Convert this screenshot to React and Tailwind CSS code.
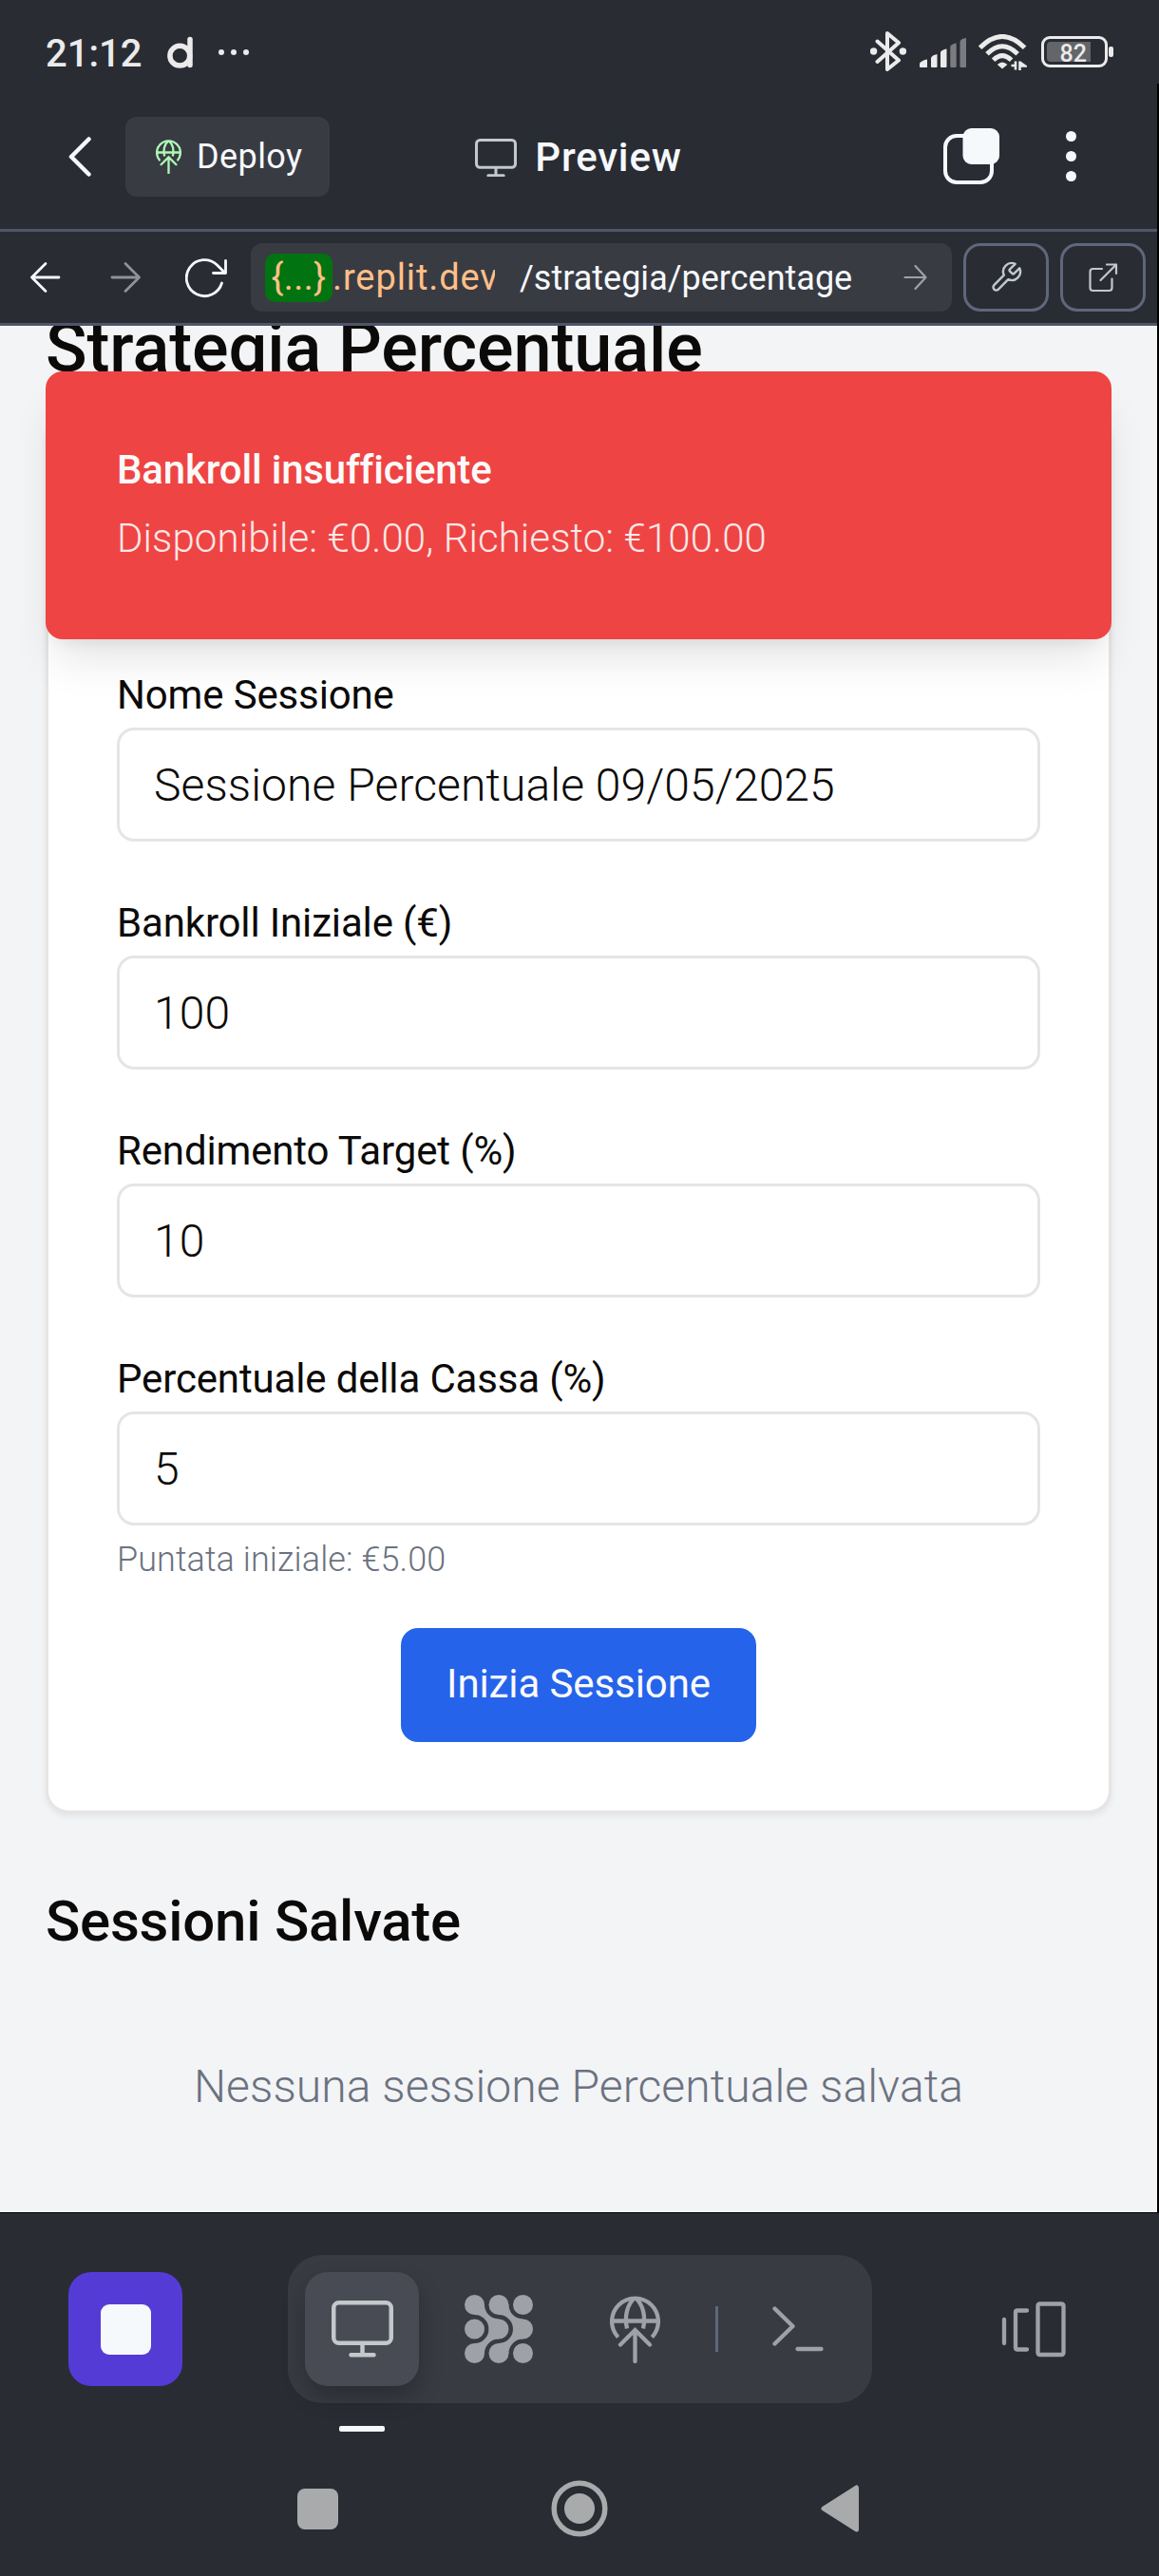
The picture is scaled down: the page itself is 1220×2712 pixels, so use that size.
import React from 'react';

const BluetoothIcon = () => (
  <svg width="38" height="42" viewBox="0 0 38 42" fill="none" stroke="#ebebeb" strokeWidth="4" strokeLinejoin="round" strokeLinecap="round">
    <path d="M7.500 10.500 30 30.500 18 40V2l12 10L7.500 32" />
    <circle cx="3.600" cy="21" r="3.700" fill="#ebebeb" stroke="none" />
    <circle cx="34.400" cy="21" r="3.700" fill="#ebebeb" stroke="none" />
  </svg>
);

const SignalIcon = () => (
  <svg width="50" height="33" viewBox="0 0 50 33" fill="#ebebeb">
    <path d="M0 28Q1 25 8 23.500V31.500Q8 32 7 32H1Q0 32 0 31Z" />
    <path d="M12 22Q13 19 18.500 18V31Q18.500 32 17.500 32H13Q12 32 12 31Z" />
    <path d="M22 16Q23 13.500 28.500 12.500V31Q28.500 32 27.500 32H23Q22 32 22 31Z" />
    <path d="M32.300 10Q33 7.500 38.700 6.500V31Q38.700 32 37.700 32H33.300Q32.300 32 32.300 31Z" fill="#7b7c81" />
    <path d="M42.500 5Q43 1.500 49 1V31Q49 32 48 32H43.500Q42.500 32 42.500 31Z" fill="#7b7c81" />
  </svg>
);

const WifiIcon = () => (
  <svg width="51" height="38" viewBox="0 0 51 38" fill="none" stroke="#ebebeb" strokeWidth="5">
    <path d="M1.600 14.300Q25 -9.500 48.600 14.300" />
    <path d="M9 20.800Q25 4.600 41.200 20.800" />
    <path d="M15.600 27.300Q25 18 34.600 27.300" />
    <path d="M25 36.500 19.800 32Q25 27 30.400 32Z" fill="#ebebeb" stroke="none" />
    <path d="M34.500 33h4.500v-4.500M39 37.500V29M43.500 28.500V38M43.500 33.500H49l-5.500-4" strokeWidth="2.600" />
  </svg>
);

const BrandD = () => (
  <svg width="28" height="34" viewBox="0 0 28 34" fill="none" stroke="#ebebeb" strokeWidth="5.500">
    <circle cx="13.300" cy="20.700" r="10.400" />
    <path d="M24 3.500V30.500" strokeLinecap="round" />
  </svg>
);

const Monitor = ({ width, color }) => (
  <svg width={width} height={width * 60 / 65} viewBox="0 0 65 60" fill="none" stroke={color} strokeWidth="4.500" strokeLinecap="round">
    <rect x="2.250" y="2.250" width="60.500" height="50.500" rx="5.500" className="hidden" />
    <rect x="2.250" y="2.250" width="60.500" height="42.500" rx="5.500" />
    <path d="M32.500 45V57M20.500 57.300H44.500" />
  </svg>
);

const DeployGlobe = ({ width, color, stroke }) => (
  <svg width={width} height={width * 71 / 53} viewBox="0 0 53 71" fill="none" stroke={color} strokeWidth={stroke}>
    <path d="M8.600 43.600A24.400 24.400 0 1 1 44.400 43.600M2 26.500H51" />
    <path d="M25.800 2.500C18.500 9 15 21 18 34.500M27.200 2.500C34.500 9 38 21 35 34.500" />
    <path d="M11 51.500 26.500 36 42 51.500M26.500 37V69" strokeLinecap="round" />
  </svg>
);

const DotsGrid = () => (
  <svg width="72" height="72" viewBox="0 0 72 72" fill="#9ea2a6">
    {[10.5, 36, 61.5].map((x) => [10.5, 36, 61.5].map((y) => <circle key={`${x}-${y}`} cx={x} cy={y} r="10.500" />))}
    {[0, 25.5].map((dx) => (
      <g key={dx} transform={`translate(${dx} 0)`}>
        <path d="M21 10.500A15 15 0 0 0 36 25.500V36H25.500A15 15 0 0 0 10.500 21V10.500Z" />
        <path d="M21 10.500A15 15 0 0 0 36 25.500V36H25.500A15 15 0 0 0 10.500 21V10.500Z" transform="matrix(1 0 0 -1 0 72)" />
      </g>
    ))}
  </svg>
);

function StatusBar() {
  return (
    <div className="flex h-[88px] items-start pl-[48px] pr-[48px] pt-[33px]">
      <span className="w-[103px] pt-[4px] text-[40px] leading-[40px] font-medium text-[#ebebeb]">21:12</span>
      <span className="ml-[25px] pt-[5px]"><BrandD /></span>
      <span className="mt-[19px] ml-[26px] flex gap-[7px]">
        <i className="size-[6px] rounded-full bg-[#ebebeb]" />
        <i className="size-[6px] rounded-full bg-[#ebebeb]" />
        <i className="size-[6px] rounded-full bg-[#ebebeb]" />
      </span>
      <div className="ml-auto flex items-start">
        <BluetoothIcon />
        <span className="ml-[14px] pt-[6px]"><SignalIcon /></span>
        <span className="ml-[12px] pt-[3px]"><WifiIcon /></span>
        <div className="mt-[5px] ml-[15px] flex items-center gap-px">
          <div className="flex h-[33px] w-[70px] rounded-[9px] border-[3px] border-[#ebebeb] p-[3px]">
            <div className="flex w-[46px] items-center justify-end rounded-l-[4px] bg-[#646569] pr-[4px]">
              <span className="pt-[3px] text-[25px] leading-none font-medium text-[#ebebeb]">82</span>
            </div>
          </div>
          <i className="h-[11px] w-[5px] rounded-[2px] bg-[#ebebeb]" />
        </div>
      </div>
    </div>
  );
}

function Header() {
  return (
    <header className="grid h-[153px] grid-cols-[1fr_auto_1fr] items-start">
      <div className="flex items-center pt-[35px] pl-[71px]">
        <svg width="26" height="42" viewBox="0 0 26 42" fill="none" stroke="#f5f9fc" strokeWidth="4.500" strokeLinecap="round" strokeLinejoin="round">
          <path d="M22.500 2.500 4 21 22.500 39.500" />
        </svg>
        <button className="ml-[35px] flex h-[84px] w-[215px] items-center rounded-[12px] bg-[#393b43] pl-[32px]">
          <DeployGlobe width={27} color="#acf8b4" stroke="4.600" />
          <span className="ml-[16px] text-[36px] leading-none tracking-[0.400px] text-[#f5f9fc]">Deploy</span>
        </button>
      </div>
      <div className="flex items-center pt-[51px]">
        <Monitor width={44} color="#c2c8cc" />
        <span className="ml-[19px] text-[42px] leading-[54px] font-medium tracking-[0.800px] text-[#f5f9fc]">Preview</span>
      </div>
      <div className="flex items-center justify-end gap-[70px] pt-[46px] pr-[85px]">
        <svg width="60" height="60" viewBox="0 0 60 60">
          <rect x="3" y="9" width="49" height="49" rx="12" fill="none" stroke="#f5f9fc" strokeWidth="4" />
          <rect x="21.500" y="1" width="38.500" height="38" rx="9" fill="#f5f9fc" />
        </svg>
        <span className="flex flex-col gap-[10px]">
          <i className="size-[11px] rounded-full bg-[#f5f9fc]" />
          <i className="size-[11px] rounded-full bg-[#f5f9fc]" />
          <i className="size-[11px] rounded-full bg-[#f5f9fc]" />
        </span>
      </div>
    </header>
  );
}

function AddressBar() {
  return (
    <div className="flex h-[102px] items-center border-y-[3px] border-[#4f5668] pl-[31px] pr-[12px]">
      <svg width="34" height="34" viewBox="0 0 34 34" fill="none" stroke="#f5f9fc" strokeWidth="2.800" strokeLinecap="round" strokeLinejoin="round">
        <path d="M31 17H2.500M17 2.500 2.500 17 17 31.500" />
      </svg>
      <svg className="ml-[51px]" width="34" height="34" viewBox="0 0 34 34" fill="none" stroke="#8f9297" strokeWidth="2.800" strokeLinecap="round" strokeLinejoin="round">
        <path d="M2 17H30.500M16 2.500 30.500 17 16 31.500" />
      </svg>
      <svg className="ml-[45px]" width="46" height="44" viewBox="0 0 46 44" fill="none" stroke="#f5f9fc" strokeWidth="2.800" strokeLinecap="round" strokeLinejoin="round">
        <path d="M38.500 28A19 19 0 1 1 33.500 9L42 17.500M42.500 4.500V17.500H29.500" />
      </svg>
      <div className="ml-[23px] flex h-[72px] w-[738px] items-center rounded-[12px] bg-[#393b43] pl-[15px] pr-[26px] text-[36px] leading-none">
        <div className="flex h-[52px] w-[242px] items-center overflow-hidden whitespace-nowrap text-[#ffc088]">
          <span className="flex h-[51px] w-[71px] shrink-0 items-center justify-center rounded-[10px] bg-[#017310] text-[38px] tracking-[0.400px]">{'{...}'}</span>
          <span className="text-[38px] leading-[50px] tracking-[0.900px]">.replit.dev</span>
        </div>
        <span className="ml-[26px] pt-px text-[#f5f9fc]">/strategia/percentage</span>
        <svg className="ml-auto" width="25" height="28" viewBox="0 0 25 28" fill="none" stroke="#9ea2a6" strokeWidth="2.200" strokeLinecap="round" strokeLinejoin="round">
          <path d="M1.500 14H23.500M12.500 2 23.500 14 12.500 26" />
        </svg>
      </div>
      <button className="ml-[12px] flex h-[72px] w-[90px] items-center justify-center rounded-[18px] border-[3px] border-[#5f677a]">
        <svg width="36" height="36" viewBox="0 0 24 24" fill="none" stroke="#c2c8cc" strokeWidth="1.600" strokeLinejoin="round" strokeLinecap="round">
          <path d="M14.700 6.300a1 1 0 0 0 0 1.400l1.600 1.600a1 1 0 0 0 1.400 0l3.770-3.770a6 6 0 0 1-7.940 7.940l-6.910 6.910a2.120 2.120 0 0 1-3-3l6.910-6.910a6 6 0 0 1 7.940-7.940l-3.760 3.760z" />
        </svg>
      </button>
      <button className="ml-[12px] flex h-[72px] w-[90px] items-center justify-center rounded-[18px] border-[3px] border-[#5f677a]">
        <svg width="32" height="32" viewBox="0 0 32 32" fill="none" stroke="#c2c8cc" strokeWidth="2.200" strokeLinejoin="round" strokeLinecap="round">
          <path d="M15 7H5.500Q2.500 7 2.500 10V27Q2.500 30 5.500 30H22.500Q25.500 30 25.500 27V17.500M20 2.500H30V12M30 2.500 13.500 19" />
        </svg>
      </button>
    </div>
  );
}

const FIELDS = [
  ['Nome Sessione', 'Sessione Percentuale 09/05/2025'],
  ['Bankroll Iniziale (€)', '100'],
  ['Rendimento Target (%)', '10'],
  ['Percentuale della Cassa (%)', '5'],
];

function Page() {
  return (
    <main className="relative h-[1986px] overflow-hidden bg-[#f3f4f6] px-[48px] text-[#0c0a09]">
      <h1 className="-mt-[24px] text-[72px] leading-[96px] font-medium tracking-[-0.100px]">Strategia Percentuale</h1>
      <section className="mt-[23px] rounded-[24px] border-[3px] border-[#e7e5e4] bg-white px-[72px] pt-[270px] pb-[72px] shadow-[0_3px_6px_rgba(0,0,0,0.07)]">
        <div className="flex flex-col gap-[65px]">
          {FIELDS.map(([label, value]) => (
            <label key={label} className="block">
              <span className="block text-[42px] leading-[42px] font-normal tracking-[-0.150px]">{label}</span>
              <input readOnly defaultValue={value} className="mt-[13px] block h-[120px] w-full rounded-[18px] border-[3px] border-[#e5e5e5] bg-white px-[36px] text-[48px] font-light tracking-[0.080px] outline-none" />
            </label>
          ))}
        </div>
        <p className="mt-[12px] text-[36px] leading-[48px] font-light tracking-[0.070px] text-[#6b7280]">Puntata iniziale: €5.00</p>
        <button className="mx-auto mt-[48px] flex h-[120px] w-[374px] items-center justify-center rounded-[18px] bg-[#2563eb] pb-[2px] text-[42px] leading-[60px] font-normal tracking-[-0.100px] text-[#fafaf9]">Inizia Sessione</button>
      </section>
      <h2 className="mt-[72px] text-[60px] leading-[84px] font-medium tracking-[-0.250px]">Sessioni Salvate</h2>
      <p className="mt-[96px] text-center text-[48px] leading-[72px] font-light tracking-[0.080px] text-[#6b7280]">Nessuna sessione Percentuale salvata</p>
      <div role="alert" className="absolute top-[48px] right-[48px] left-[48px] flex h-[282px] flex-col gap-[12px] rounded-[18px] bg-[#ef4444] p-[75px] text-[42px] leading-[60px] text-[#fafaf9] shadow-[0_30px_45px_-9px_rgba(0,0,0,0.1),0_12px_18px_-12px_rgba(0,0,0,0.1)]">
        <div className="-mt-[1px] font-medium tracking-[-0.200px] [font-variant-ligatures:common-ligatures]">Bankroll insufficiente</div>
        <div className="font-light tracking-[0.080px] opacity-90">Disponibile: €0.00, Richiesto: €100.00</div>
      </div>
    </main>
  );
}

function BottomBar() {
  return (
    <footer className="border-t border-black">
      <div className="flex h-[224px] items-start pt-[44px] pl-[72px] pr-[97px]">
        <button className="mt-[18px] flex size-[120px] items-center justify-center rounded-[24px] bg-[#553bd6]">
          <i className="size-[53px] rounded-[9px] bg-[#f5f9fc]" />
        </button>
        <div className="ml-[111px] flex h-[156px] w-[615px] items-center rounded-[36px] bg-[#393b43] pl-[18px]">
          <button className="flex size-[120px] items-center justify-center rounded-[24px] bg-[#484b54] shadow-[0_12px_24px_rgba(2,2,3,0.24)]">
            <Monitor width={65} color="#c2c8cc" />
          </button>
          <span className="ml-[48px]"><DotsGrid /></span>
          <span className="ml-[81px]"><DeployGlobe width={53} color="#9ea2a6" stroke="4.300" /></span>
          <i className="ml-[58px] h-[48px] w-[3px] bg-[#5f677a]" />
          <svg className="ml-[57px]" width="54" height="48" viewBox="0 0 54 48" fill="none" stroke="#9ea2a6" strokeWidth="4.300" strokeLinecap="round" strokeLinejoin="round">
            <path d="M2.500 2.500 21.500 21 2.500 39.500M26.500 45H51.500" />
          </svg>
        </div>
        <svg className="mt-[49px] ml-auto" width="69" height="59" viewBox="0 0 69 59" fill="none" stroke="#9ea2a6" strokeWidth="4.300" strokeLinecap="round" strokeLinejoin="round">
          <path d="M3 19V44M27 9.500H17Q15 9.500 15 11.500V48.500Q15 50.500 17 50.500H27" />
          <rect x="38.500" y="2.500" width="27" height="53.500" rx="2" />
        </svg>
      </div>
      <div className="flex h-[6px] pl-[357px]">
        <i className="w-[48px] rounded-[2px] bg-[#f5f9fc]" />
      </div>
      <nav className="flex h-[152px] items-center pt-[10px] pl-[313px]">
        <i className="size-[43px] rounded-[8px] bg-[#a9aaac]" />
        <svg className="ml-[224px]" width="60" height="60" viewBox="0 0 60 60">
          <circle cx="30" cy="30" r="26.800" fill="none" stroke="#a9aaac" strokeWidth="5.500" />
          <circle cx="30" cy="30" r="16" fill="#a9aaac" />
        </svg>
        <svg className="ml-[224px]" width="41" height="50" viewBox="0 0 41 50" fill="#a9aaac" stroke="#a9aaac" strokeWidth="5" strokeLinejoin="round">
          <path d="M37.500 3V47L3 25Z" />
        </svg>
      </nav>
    </footer>
  );
}

export default function App() {
  return (
    <div className="h-[2712px] w-[1220px] overflow-hidden bg-[#2a2c34] font-['Roboto',sans-serif]">
      <StatusBar />
      <div className="border-r-[2px] border-black">
        <Header />
        <AddressBar />
        <Page />
      </div>
      <BottomBar />
    </div>
  );
}
